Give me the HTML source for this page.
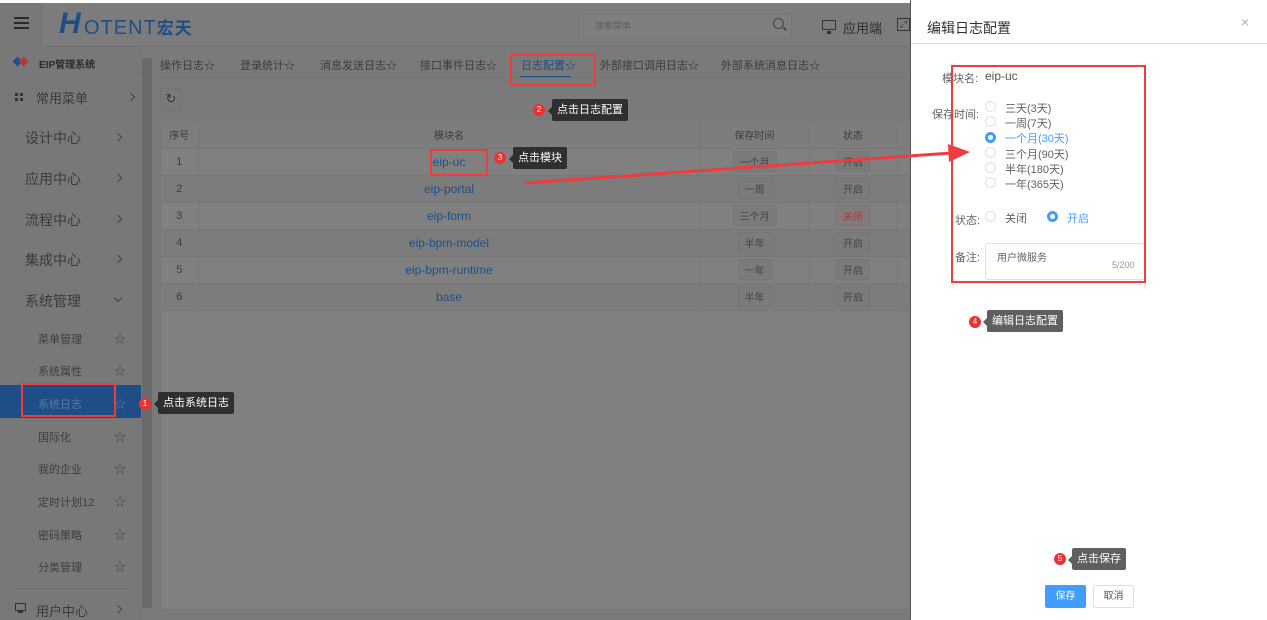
<!DOCTYPE html>
<html><head><meta charset="utf-8">
<style>
*{box-sizing:border-box;margin:0;padding:0}
body{width:1267px;height:620px;overflow:hidden;position:relative;background:#7a7a7a;font-family:"Liberation Sans","Noto Sans CJK SC",sans-serif;font-size:12px;color:#3a3a3a}
.abs{position:absolute}
.hdr{left:0;top:3px;width:912px;height:44px;background:#7c7c7c;border-bottom:1px solid #747474}
.side{left:0;top:47px;width:142px;height:573px;background:#787878}
.sb{left:142px;top:58px;width:10px;height:550px;background:#6a6a6a}
.mi{position:absolute;left:25px;font-size:14px;color:#3b3b3b}
.sub{position:absolute;left:38px;font-size:11px;color:#3e3e3e}
.star{position:absolute;left:114px;font-size:12px;color:#444}
.chev{position:absolute;left:115px;width:6px;height:6px;border-top:1.5px solid #444;border-right:1.5px solid #444;transform:rotate(45deg)}
.main{left:160px;top:120px;width:752px;height:490px;background:#808080;border:1px solid #777}
.tab{position:absolute;top:57px;font-size:11px;color:#3c3c3c}
table{border-collapse:collapse}
td{height:27px;border-bottom:1px solid #777;border-right:1px solid #777;text-align:center;font-size:11px;color:#3c3c3c}
.lnk{color:#1d4f8a;font-size:12px}
.tag{display:inline-block;padding:2px 6px;border:1px solid #767676;background:#7b7b7b;border-radius:2px;font-size:10px;color:#444}
.tip{position:absolute;background:#2f2f2f;color:#fff;font-size:11px;padding:4px 5px;border-radius:2px;line-height:14px}
.tip.l{background:#5f5f5f}
.tip:before{content:"";position:absolute;left:-4px;top:8px;border:4px solid transparent;border-left:0;border-right-color:inherit}
.badge{position:absolute;width:12px;height:12px;border-radius:50%;background:#f03030;color:#fff;font-size:8px;text-align:center;line-height:12px}
.drawer{left:911px;top:0;width:356px;height:620px;background:#fff;box-shadow:-1px 0 0 #555}
.rb{position:absolute;width:11px;height:11px;border-radius:50%;border:1px solid #dcdfe6;background:#fff}
.rb.on{border:3.5px solid #409eff;background:#fff}
.rt{position:absolute;font-size:11px;color:#606266}
.red{position:absolute;border:2px solid #f03c3c}
</style></head><body>
<div class="abs" style="left:0;top:0;width:1267px;height:3px;background:#fff"></div>
<div class="abs hdr"></div>
<div class="abs" style="left:0;top:3px;width:43px;height:44px;background:#787878"></div>
<div class="abs" style="left:14px;top:17px;width:15px;height:2px;background:#2a2a2a;box-shadow:0 5px 0 #2a2a2a,0 10px 0 #2a2a2a"></div>
<div class="abs" style="left:59px;top:8px;font-size:30px;font-weight:bold;font-style:italic;color:#1f4e85;font-family:'Liberation Sans',sans-serif;line-height:32px">H</div>
<div class="abs" style="left:84px;top:16px;font-size:20px;color:#1f4e85;letter-spacing:1px;line-height:24px">OTENT<span style="font-size:17px;font-weight:bold">宏天</span></div>
<div class="abs" style="left:583px;top:14px;width:209px;height:24px;border:1px solid #777;background:#7f7f7f"></div>
<div class="abs" style="left:595px;top:19px;font-size:9px;color:#5e5e5e">搜索菜单</div>
<div class="abs" style="left:773px;top:18px;width:11px;height:11px;border:1.5px solid #444;border-radius:50%"></div>
<div class="abs" style="left:783px;top:28px;width:4px;height:1.5px;background:#444;transform:rotate(45deg)"></div>
<div class="abs" style="left:822px;top:20px;width:14px;height:10px;border:1.5px solid #333"></div>
<div class="abs" style="left:827px;top:31px;width:4px;height:3px;background:#333"></div>
<div class="abs" style="left:843px;top:18px;font-size:13px;color:#2c2c2c">应用端</div>
<div class="abs" style="left:897px;top:18px;width:13px;height:13px;border:1.5px solid #333;font-size:9px;line-height:10px;text-align:center">⤢</div>

<div class="abs side"></div>
<div class="abs" style="left:0;top:47px;width:142px;height:28px;border-bottom:1px solid #727272"></div>
<div class="abs" style="left:14px;top:58px;width:7px;height:7px;background:#1e4f8c;transform:rotate(45deg)"></div>
<div class="abs" style="left:20px;top:58px;width:7px;height:7px;background:#b03a3a;transform:rotate(45deg)"></div>
<div class="abs" style="left:39px;top:56px;font-size:10px;font-weight:bold;color:#2b2b2b">EIP管理系统</div>
<div class="abs" style="left:15px;top:93px;width:3px;height:3px;background:#333;box-shadow:5px 0 0 #333,0 5px 0 #333,5px 5px 0 #333"></div>
<div class="mi" style="left:36px;top:88px;font-size:13px">常用菜单</div><div class="chev" style="left:128px;top:94px"></div>
<div class="mi" style="top:128px">设计中心</div><div class="chev" style="top:134px"></div>
<div class="mi" style="top:169px">应用中心</div><div class="chev" style="top:175px"></div>
<div class="mi" style="top:210px">流程中心</div><div class="chev" style="top:216px"></div>
<div class="mi" style="top:250px">集成中心</div><div class="chev" style="top:256px"></div>
<div class="mi" style="top:291px">系统管理</div><div class="chev" style="top:295px;transform:rotate(135deg)"></div>
<div class="abs" style="left:0;top:385px;width:141px;height:33px;background:#1f4d85"></div>
<div class="sub" style="top:331px">菜单管理</div><div class="star" style="top:330px">☆</div>
<div class="sub" style="top:363px">系统属性</div><div class="star" style="top:362px">☆</div>
<div class="sub" style="top:396px;color:#5a7aa6">系统日志</div><div class="star" style="top:395px;color:#5a7aa6">☆</div>
<div class="sub" style="top:429px">国际化</div><div class="star" style="top:428px">☆</div>
<div class="sub" style="top:461px">我的企业</div><div class="star" style="top:460px">☆</div>
<div class="sub" style="top:494px">定时计划12</div><div class="star" style="top:493px">☆</div>
<div class="sub" style="top:527px">密码策略</div><div class="star" style="top:526px">☆</div>
<div class="sub" style="top:559px">分类管理</div><div class="star" style="top:558px">☆</div>
<div class="abs" style="left:15px;top:588px;width:112px;height:1px;background:#707070"></div>
<div class="abs" style="left:15px;top:603px;width:11px;height:8px;border:1.5px solid #333"></div>
<div class="abs" style="left:18px;top:611px;width:5px;height:2px;background:#333"></div>
<div class="mi" style="left:36px;top:601px;font-size:13px">用户中心</div><div class="chev" style="top:606px"></div>
<div class="abs sb"></div>

<div class="tab" style="left:160px">操作日志☆</div>
<div class="tab" style="left:240px">登录统计☆</div>
<div class="tab" style="left:320px">消息发送日志☆</div>
<div class="tab" style="left:420px">接口事件日志☆</div>
<div class="tab" style="left:521px;color:#1f4e8a">日志配置☆</div>
<div class="abs" style="left:520px;top:76px;width:51px;height:2px;background:#1f4e8a"></div>
<div class="tab" style="left:600px">外部接口调用日志☆</div>
<div class="tab" style="left:721px">外部系统消息日志☆</div>
<div class="abs" style="left:160px;top:77px;width:752px;height:1px;background:#727272"></div>
<div class="abs" style="left:160px;top:88px;width:22px;height:22px;border:1px solid #747474;text-align:center;font-size:13px;line-height:20px;color:#333">↻</div>

<div class="abs main">
<table style="width:752px">
<tr style="background:#7d7d7d"><td style="width:37px;font-size:10px">序号</td><td style="width:502px;font-size:10px">模块名</td><td style="width:109px;font-size:10px">保存时间</td><td style="width:88px;font-size:10px">状态</td><td style="border-right:0"></td></tr>
<tr><td>1</td><td><span class="lnk">eip-uc</span></td><td><span class="tag">一个月</span></td><td><span class="tag">开启</span></td><td style="border-right:0"></td></tr>
<tr style="background:#7c7c7c"><td>2</td><td><span class="lnk">eip-portal</span></td><td><span class="tag">一周</span></td><td><span class="tag">开启</span></td><td style="border-right:0"></td></tr>
<tr><td>3</td><td><span class="lnk">eip-form</span></td><td><span class="tag">三个月</span></td><td><span class="tag" style="color:#a83a3a;background:#857979">关闭</span></td><td style="border-right:0"></td></tr>
<tr style="background:#7c7c7c"><td>4</td><td><span class="lnk">eip-bpm-model</span></td><td><span class="tag">半年</span></td><td><span class="tag">开启</span></td><td style="border-right:0"></td></tr>
<tr><td>5</td><td><span class="lnk">eip-bpm-runtime</span></td><td><span class="tag">一年</span></td><td><span class="tag">开启</span></td><td style="border-right:0"></td></tr>
<tr style="background:#7c7c7c"><td>6</td><td><span class="lnk">base</span></td><td><span class="tag">半年</span></td><td><span class="tag">开启</span></td><td style="border-right:0"></td></tr>
</table>
</div>

<div class="red" style="left:21px;top:383px;width:95px;height:34px"></div>
<div class="badge" style="left:139px;top:398px">1</div>
<div class="tip" style="left:158px;top:392px;border-right-color:#2f2f2f">点击系统日志</div>
<div class="red" style="left:510px;top:54px;width:86px;height:32px"></div>
<div class="badge" style="left:533px;top:104px">2</div>
<div class="tip" style="left:552px;top:99px;border-right-color:#2f2f2f">点击日志配置</div>
<div class="red" style="left:430px;top:149px;width:58px;height:27px"></div>
<div class="badge" style="left:494px;top:152px">3</div>
<div class="tip" style="left:513px;top:147px;border-right-color:#2f2f2f">点击模块</div>

<div class="abs drawer">
<div class="abs" style="left:16px;top:18px;font-size:14px;color:#303133">编辑日志配置</div>
<div class="abs" style="left:330px;top:14px;font-size:14px;color:#aaa">×</div>
<div class="abs" style="left:0;top:43px;width:356px;height:1px;background:#ddd"></div>
<div class="rt" style="left:31px;top:70px">模块名:</div><div class="rt" style="left:74px;top:69px;font-size:12px;color:#555">eip-uc</div>
<div class="rt" style="left:21px;top:106px">保存时间:</div>
<div class="rb" style="left:74px;top:101px"></div><div class="rt" style="left:94px;top:100px">三天(3天)</div>
<div class="rb" style="left:74px;top:116px"></div><div class="rt" style="left:94px;top:115px">一周(7天)</div>
<div class="rb on" style="left:74px;top:132px"></div><div class="rt" style="left:94px;top:130px;color:#409eff">一个月(30天)</div>
<div class="rb" style="left:74px;top:147px"></div><div class="rt" style="left:94px;top:146px">三个月(90天)</div>
<div class="rb" style="left:74px;top:162px"></div><div class="rt" style="left:94px;top:161px">半年(180天)</div>
<div class="rb" style="left:74px;top:177px"></div><div class="rt" style="left:94px;top:176px">一年(365天)</div>
<div class="rt" style="left:44px;top:212px">状态:</div>
<div class="rb" style="left:74px;top:211px"></div><div class="rt" style="left:94px;top:210px">关闭</div>
<div class="rb on" style="left:136px;top:211px"></div><div class="rt" style="left:156px;top:210px;color:#409eff">开启</div>
<div class="rt" style="left:44px;top:249px">备注:</div>
<div class="abs" style="left:74px;top:243px;width:160px;height:37px;border:1px solid #dcdfe6;border-radius:3px"></div>
<div class="rt" style="left:86px;top:249px;font-size:10px">用户微服务</div>
<div class="rt" style="left:201px;top:260px;font-size:9px;color:#999">5/200</div>
<div class="red" style="left:40px;top:65px;width:195px;height:218px"></div>
<div class="badge" style="left:58px;top:316px">4</div>
<div class="tip l" style="left:76px;top:310px;border-right-color:#5f5f5f">编辑日志配置</div>
<div class="badge" style="left:143px;top:553px">5</div>
<div class="tip l" style="left:161px;top:548px;border-right-color:#5f5f5f">点击保存</div>
<div class="abs" style="left:134px;top:585px;width:41px;height:23px;background:#409eff;border-radius:2px;color:#fff;font-size:10px;text-align:center;line-height:23px">保存</div>
<div class="abs" style="left:182px;top:585px;width:41px;height:23px;border:1px solid #dcdfe6;border-radius:2px;color:#555;font-size:10px;text-align:center;line-height:21px">取消</div>
</div>

<svg class="abs" style="left:0;top:0" width="1267" height="620">
<line x1="525" y1="183" x2="952" y2="153" stroke="#f03c3c" stroke-width="3"/>
<polygon points="948,144 970,152 949,162" fill="#f03c3c"/>
</svg>
</body></html>
